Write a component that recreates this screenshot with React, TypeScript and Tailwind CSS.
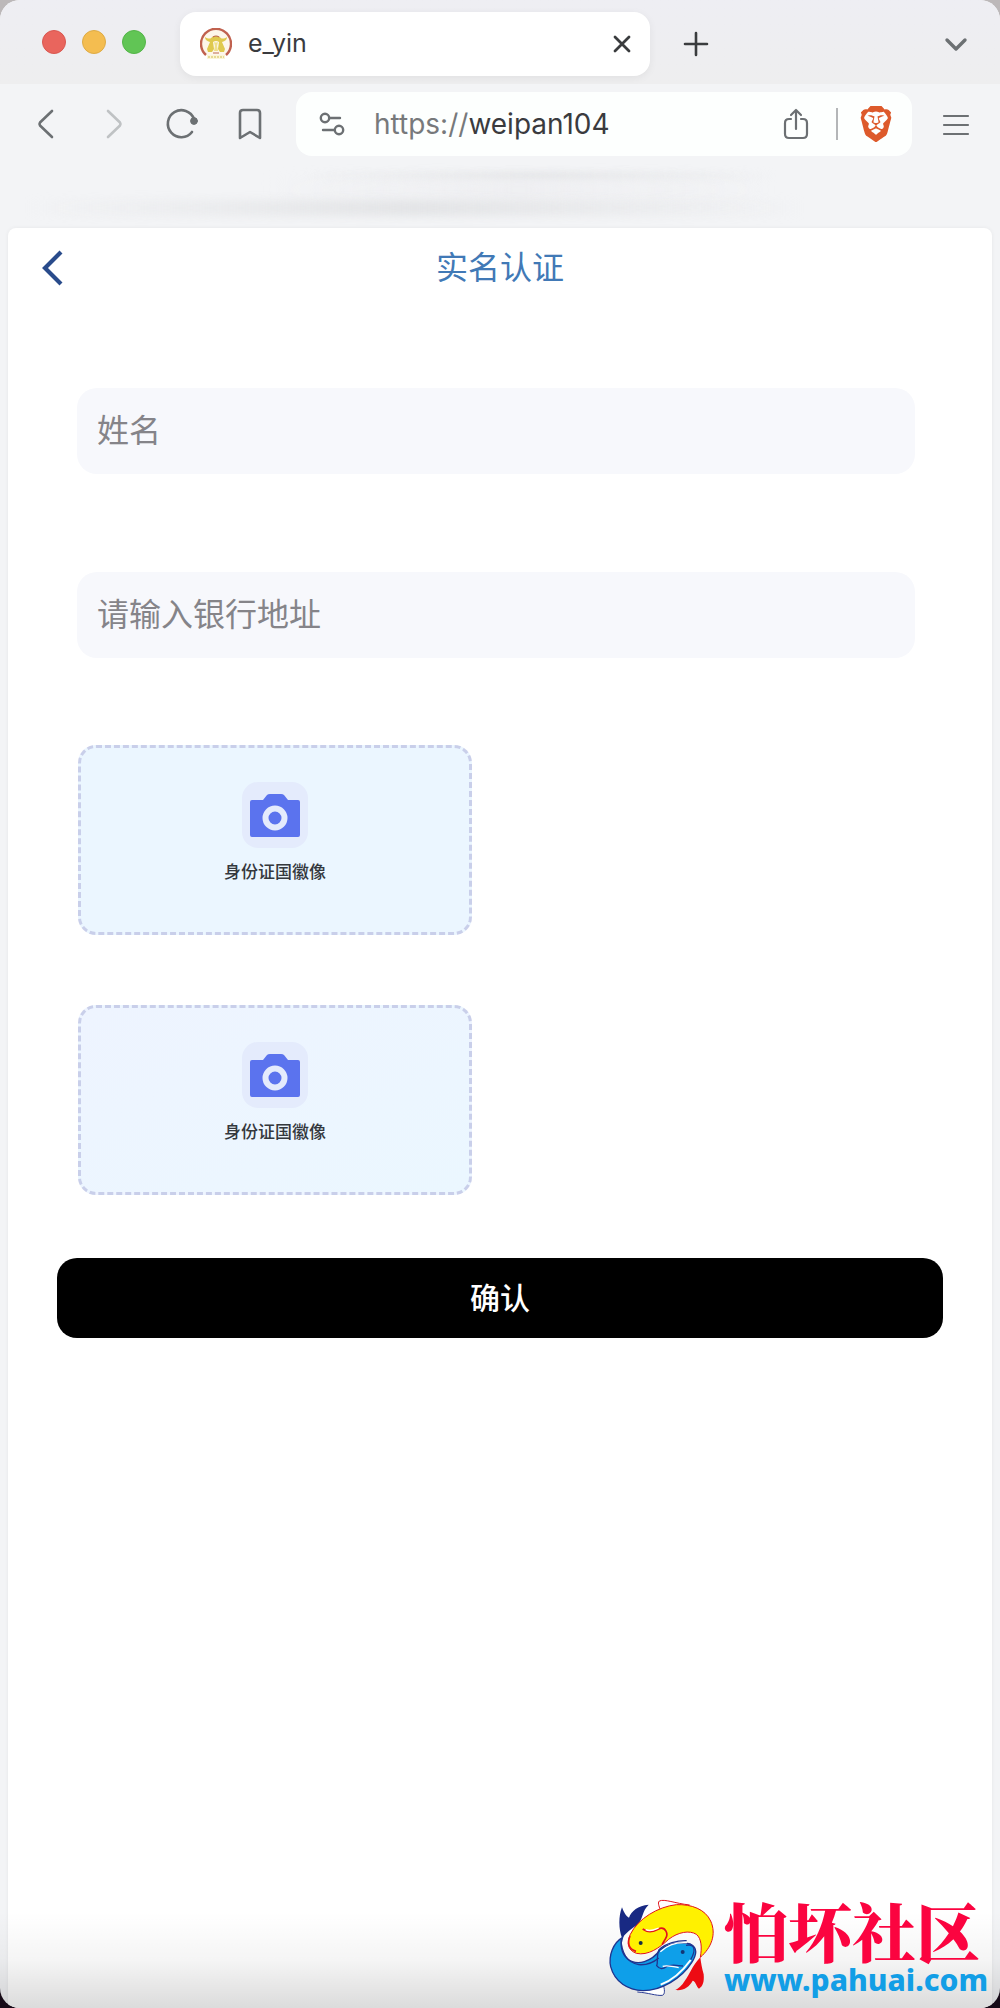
import React from 'react';
import { SiBrave } from 'react-icons/si';

interface FieldProps {
  id: string;
  label: string;
}

interface UploadCardProps {
  id: string;
  label: string;
  colorClass: string;
}

const stroke = {
  fill: 'none',
  stroke: 'currentColor',
  strokeLinecap: 'round',
  strokeLinejoin: 'round',
} as const;

const Favicon = () => (
  <svg viewBox="0 0 32 32" className="h-8 w-8 shrink-0" aria-hidden="true">
    <circle cx="16" cy="16" r="15" fill="#fdf6ea" />
    <path d="M6 27A15 15 0 1 1 26 27" fill="none" stroke="#c0614f" strokeWidth="2.4" />
    <path d="M5 9C8 11 11 11 12 9Q16 7 20 9C21 11 24 11 27 9C27 12 25 13 22 14L25 21L24 24H20L18 21L19 14Q16 12 13 14L14 21L12 24H8L7 21L10 14C7 13 5 12 5 9Z" fill="#dfc94e" />
    <path d="M14 14Q16 15 18 14L17 18L18 23H14L15 18Z" fill="#efe08a" />
    <path d="M13 9Q16 7 19 9M13 25H19" fill="none" stroke="#bd6a50" strokeWidth="1.200" />
    <path d="M7 27H25V31H7Z" fill="#fbf5d6" />
    <path d="M8 29H24" stroke="#e0d080" strokeWidth="1.500" strokeDasharray="2 1" />
  </svg>
);

const TabStrip = () => (
  <div className="flex h-[84px] items-center bg-gradient-to-b from-[#eeeef3] to-[#eeeeef] pr-8 pl-[42px]">
    <div className="flex w-[138px] shrink-0 gap-4">
      <button aria-label="Close window" className="h-6 w-6 rounded-full border border-[#d95750] bg-[#e9655d]" />
      <button aria-label="Minimize window" className="h-6 w-6 rounded-full border border-[#deab45] bg-[#f4bd50]" />
      <button aria-label="Zoom window" className="h-6 w-6 rounded-full border border-[#53b548] bg-[#61c555]" />
    </div>
    <div className="mt-1 flex h-16 w-[470px] items-center rounded-2xl bg-white pr-4 pl-5 shadow-[0_2px_8px_rgba(0,0,0,0.06)]">
      <Favicon />
      <span className="ml-4 flex-1 text-[25px] text-[#3a3b3e]">e_yin</span>
      <button aria-label="Close tab" className="text-[#3a3c3e]">
        <svg viewBox="0 0 24 24" className="h-6 w-6" strokeWidth="2.8" {...stroke}>
          <path d="M5 5L19 19M19 5L5 19" />
        </svg>
      </button>
    </div>
    <button aria-label="New tab" className="mt-1 ml-8 text-[#3a3c3e]">
      <svg viewBox="0 0 28 28" className="h-7 w-7" strokeWidth="2.6" {...stroke}>
        <path d="M14 3V25M3 14H25" />
      </svg>
    </button>
    <button aria-label="Search tabs" className="mt-1 ml-auto text-[#6c7073]">
      <svg viewBox="0 0 24 24" className="h-6 w-6" strokeWidth="3.4" {...stroke}>
        <path d="M3 8L12 17L21 8" />
      </svg>
    </button>
  </div>
);

const Toolbar = () => (
  <div className="flex h-20 items-center pr-[30px] pl-8 text-[#6c7073]">
    <div className="flex w-[264px] shrink-0 items-center gap-9">
      <button aria-label="Back">
        <svg viewBox="0 0 32 32" className="h-8 w-8" strokeWidth="2.6" {...stroke}>
          <path d="M20 3L8 14.500Q7 16 8 17.500L20 29" />
        </svg>
      </button>
      <button aria-label="Forward" className="text-[#bfc2c4]">
        <svg viewBox="0 0 32 32" className="h-8 w-8" strokeWidth="2.6" {...stroke}>
          <path d="M8 3L20 14.500Q21 16 20 17.500L8 29" />
        </svg>
      </button>
      <button aria-label="Reload">
        <svg viewBox="0 0 32 32" className="h-8 w-8 overflow-visible" strokeWidth="2.6" {...stroke}>
          <path d="M26 11A13.500 13.500 0 1 0 24 24" />
          <circle cx="26" cy="13" r="3.400" fill="currentColor" strokeWidth="1" />
        </svg>
      </button>
      <button aria-label="Bookmark">
        <svg viewBox="0 0 32 32" className="h-8 w-8" strokeWidth="2.6" {...stroke}>
          <path d="M4 5Q4 2 7 2H21Q24 2 24 5V30L14 24L4 30Z" />
        </svg>
      </button>
    </div>
    <div className="flex h-16 flex-1 items-center rounded-2xl bg-[#fdfffe] px-[18px]">
      <svg viewBox="0 0 32 32" className="h-8 w-8 shrink-0" strokeWidth="2.4" {...stroke}>
        <circle cx="11" cy="10" r="4.200" />
        <path d="M16 10H26M9 22H20" />
        <circle cx="25" cy="22" r="4.200" />
      </svg>
      <div className="ml-7 flex-1 text-[28px]">
        <span className="text-[#77797b]">https://</span>
        <span className="text-[#3a3b3e]">weipan104</span>
      </div>
      <button aria-label="Share">
        <svg viewBox="0 0 32 32" className="h-8 w-8" strokeWidth="2.2" {...stroke}>
          <path d="M11 11H9Q5 11 5 15V26Q5 30 9 30H23Q27 30 27 26V15Q27 11 23 11H21M16 21V2M11 7L16 2L21 7" />
        </svg>
      </button>
      <div className="mr-5 ml-6 h-8 w-0.5 bg-[#b4b6b8]" />
      <button aria-label="Brave Shields" className="text-[#dd5a2b]">
        <SiBrave size={36} />
      </button>
    </div>
    <button aria-label="Menu" className="ml-[30px]">
      <svg viewBox="0 0 28 28" className="h-7 w-7" strokeWidth="2.2" {...stroke}>
        <path d="M2 6H26M2 15H26M2 24H26" />
      </svg>
    </button>
  </div>
);

/* smudged bookmarks bar */
const BookmarksBar = () => (
  <div className="flex h-16 flex-col justify-between px-6 pt-2 pb-3">
    <div className="ml-[29%] h-2 w-[50%] bg-gradient-to-r from-transparent via-[#e4e5e7] to-transparent blur-[3px]" />
    <div className="ml-[25%] h-4 w-[54%] bg-gradient-to-r from-transparent via-[#ededf0] to-transparent blur-sm" />
    <div className="h-4 w-[82%] bg-gradient-to-r from-transparent via-[#e3e4e6] to-transparent blur-[4px]" />
  </div>
);

const Field: React.FC<FieldProps> = ({ id, label }) => (
  <input
    id={id}
    type="text"
    aria-label={label}
    placeholder={label}
    className="h-[86px] w-full rounded-[20px] bg-[#f7f8fc] px-5 pb-0.5 text-[32px] text-[#333333] outline-none placeholder:text-[#858489]"
  />
);

const UploadCard: React.FC<UploadCardProps> = ({ id, label, colorClass }) => (
  <label
    htmlFor={id}
    className={`flex h-[190px] w-[394px] cursor-pointer flex-col items-center rounded-[18px] border-[3px] border-dashed border-[#c9cfea] pt-[34px] ${colorClass}`}
  >
    <span className="flex h-[66px] w-[66px] items-center justify-center rounded-2xl bg-[#e4ebfc]">
      <svg viewBox="0 0 50 44" className="h-11 w-[50px]" aria-hidden="true">
        <path d="M2 7H13L17 2Q18 1 20 1H31Q33 1 34 2L38 7H48Q50 7 50 9V42Q50 44 48 44H2Q0 44 0 42V9Q0 7 2 7Z" fill="#5b73ee" />
        <circle cx="25" cy="25" r="9.500" fill="none" stroke="#e4ebfc" strokeWidth="6" />
      </svg>
    </span>
    <span className="mt-3 text-[17px] leading-6 font-medium text-[#34383d]">{label}</span>
    <input id={id} type="file" accept="image/*" className="sr-only" />
  </label>
);

const FishLogo = () => (
  <svg viewBox="80 56 324 297" className="h-[99px] w-[108px] shrink-0" aria-hidden="true">
    <path d="M238 98C236 84 227 72 234 65C250 58 280 72 325 77" fill="#fff" stroke="#e2131c" strokeWidth="3" />
    <path d="M245 312C250 330 252 345 243 348C225 350 200 340 168 338" fill="#fff" stroke="#2a3b93" strokeWidth="3" />
    <path d="M122 176C112 150 111 110 122 84C128 100 135 112 143 115C150 95 170 78 202 76C182 95 186 115 170 135C150 148 135 160 122 176Z" fill="#182983" />
    <path d="M124 174C95 190 81 230 88 262C100 308 140 333 185 334C240 334 300 298 331 250C346 226 350 205 327 194C298 187 262 190 236 212C212 245 168 263 138 238C120 222 115 195 124 174Z" fill="#0e9fe9" stroke="#20348f" strokeWidth="4" />
    <path d="M119 180C120 218 136 250 172 256C200 258 216 250 232 236" fill="none" stroke="#20348f" strokeWidth="4" />
    <path d="M357 234C390 205 406 165 388 125C372 90 330 74 285 76C230 82 170 118 147 165C136 190 138 212 165 222C200 230 235 205 262 180C290 158 325 152 345 165C361 178 362 205 357 234Z" fill="#fff100" stroke="#e2131c" strokeWidth="3" />
    <path d="M184 149C204 163 219 155 236 147C252 143 262 163 253 177L242 196M146 170C137 192 142 209 164 216" fill="none" stroke="#e2131c" strokeWidth="5" />
    <path d="M193 151C209 158 220 151 232 146" fill="none" stroke="#fff" strokeWidth="4" />
    <path d="M316 184C289 183 253 192 233 211C224 231 231 250 226 259C235 271 246 269 255 262C271 253 288 259 305 260M314 198C342 192 344 213 328 241" fill="none" stroke="#20348f" strokeWidth="4" />
    <path d="M317 190C288 188 258 197 237 217M244 261C257 256 272 262 292 265" fill="none" stroke="#fff" strokeWidth="4" />
    <path d="M328 242C304 275 273 303 238 316" fill="none" stroke="#fff" strokeWidth="6" />
    <path d="M357 234C330 262 327 284 310 305C302 319 290 328 282 332C307 335 324 322 334 304C342 304 344 320 353 328C365 321 369 307 367 285C362 268 359 251 357 234Z" fill="#ed0b13" />
    <circle cx="178" cy="191" r="6" fill="#162e45" />
    <circle cx="304" cy="218" r="6" fill="#123675" />
  </svg>
);

const Watermark = () => (
  <a href="#" className="absolute right-3 bottom-2.5 flex items-center gap-2">
    <FishLogo />
    <span className="flex flex-col items-start">
      <span className="font-['Noto_Serif_CJK_SC','Noto_Sans_CJK_SC',serif] text-[64px] leading-[66px] font-black text-[#fb0440]">怕坏社区</span>
      <span className="font-['Noto_Sans',sans-serif] text-[30px] leading-9 font-extrabold text-[#129ee6]">www.pahuai.com</span>
    </span>
  </a>
);

const App = () => (
  <div className="min-h-screen bg-gradient-to-b from-[#bcb8b9] from-5% to-[#170b18] to-95% font-['Inter','Noto_Sans_CJK_SC',sans-serif]">
    <div className="relative flex min-h-screen flex-col overflow-hidden rounded-[20px] bg-[#f3f4f6]">
      <header>
        <TabStrip />
        <Toolbar />
        <BookmarksBar />
      </header>
      <main className="mx-2 flex-1 rounded-t-lg bg-white shadow-[0_0_4px_rgba(0,0,0,0.06)]">
        <div className="flex h-20 items-center px-7">
          <button aria-label="返回" className="w-9 text-[#294b8b]">
            <svg viewBox="0 0 32 40" className="h-10 w-8" fill="none" stroke="currentColor" strokeWidth="4.2">
              <path d="M25 4L9 20L25 36" />
            </svg>
          </button>
          <h1 className="flex-1 pr-9 text-center text-[32px] text-[#4179b6]">实名认证</h1>
        </div>
        <form onSubmit={(e) => e.preventDefault()} className="px-[49px] pt-20">
          <div className="flex flex-col gap-[98px] pr-7 pl-5">
            <Field id="name" label="姓名" />
            <Field id="bank-address" label="请输入银行地址" />
          </div>
          <div className="mt-[87px] flex flex-col gap-[70px] pl-[21px]">
            <UploadCard id="id-front" label="身份证国徽像" colorClass="bg-[#ebf6ff]" />
            <UploadCard id="id-back" label="身份证国徽像" colorClass="bg-gradient-to-br from-[#eef4ff] to-[#ebf7ff]" />
          </div>
          <button type="submit" className="mt-[63px] h-20 w-full rounded-[20px] bg-black text-[30px] font-medium text-white">
            确认
          </button>
        </form>
      </main>
      <div className="pointer-events-none absolute inset-x-0 bottom-0 h-24 bg-gradient-to-b from-transparent via-black/4 to-black/14" />
      <Watermark />
    </div>
  </div>
);

export default App;
